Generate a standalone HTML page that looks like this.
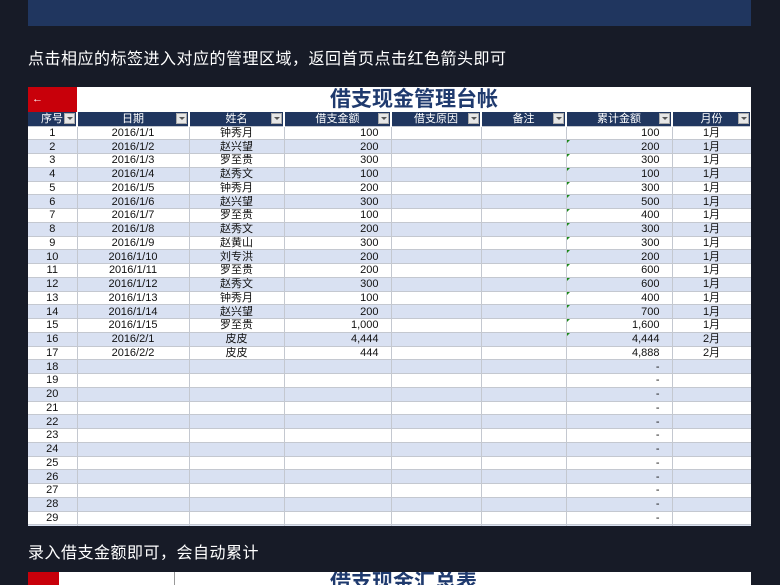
<!DOCTYPE html>
<html style="width:780px;height:585px;overflow:hidden"><head><meta charset="utf-8">
<style>
*{margin:0;padding:0;box-sizing:border-box}
body{width:780px;height:585px;overflow:hidden;background:#171b27;font-family:"Liberation Sans","Noto Sans CJK SC",sans-serif;position:relative}
.banner{position:absolute;left:28px;top:0;width:723px;height:26px;background:#20365f}
.cap{position:absolute;left:28px;color:#fff;font-size:16px;letter-spacing:0.5px}
.sheet{position:absolute;left:28px;top:87px;width:723px;height:439px;background:#fff;overflow:hidden}
.red{position:absolute;left:0;top:0;width:49px;height:25px;background:#c8000a;color:#fff;font-size:11px;line-height:25px;padding-left:4px}
.title{position:absolute;left:49px;top:0;width:674px;height:25px;text-align:center;color:#1f3a6e;font-size:21px;font-weight:bold;line-height:26px;letter-spacing:0px}
table{position:absolute;left:0;top:25px;border-collapse:collapse;table-layout:fixed;width:723px}
td,th{font-size:11px;height:13.75px;line-height:12px;padding:0 3px;border-right:1px solid #c4c8d0;border-bottom:1px solid #c4c8d0;white-space:nowrap;overflow:hidden;color:#111}
th{background:#20365f;color:#fff;font-weight:normal;position:relative;height:14px;border-right:2px solid #fff;text-align:center}
th i{position:absolute;right:1px;top:1px;width:11px;height:11px;background:#e6e6e6;border:1px solid #aaa}
th i:after{content:"";position:absolute;left:2px;top:3px;border-left:3px solid transparent;border-right:3px solid transparent;border-top:3px solid #555}
tr:nth-child(odd) td{background:#d9e1f2}
.c{text-align:center}.r{text-align:right;padding-right:12px}
.g{position:relative}
.g:before{content:"";position:absolute;left:0;top:0;border-top:3px solid #1a8a1a;border-right:3px solid transparent}
.sheet2{position:absolute;left:28px;top:572px;width:723px;height:13px;background:#fff;overflow:hidden}
.sheet2 .rd{position:absolute;left:0;top:0;width:31px;height:20px;background:#c8000a}
.sheet2 .dv{position:absolute;left:146px;top:0;width:1px;height:20px;background:#999}
.sheet2 .t{position:absolute;left:302px;top:-2px;color:#1f3a6e;font-size:21px;font-weight:bold;line-height:26px}
</style></head><body>
<div class="banner"></div>
<div class="cap" style="top:45px">点击相应的标签进入对应的管理区域，返回首页点击红色箭头即可</div>
<div class="sheet">
<div class="red">←</div>
<div class="title">借支现金管理台帐</div>
<table>
<colgroup><col style="width:49px"><col style="width:112px"><col style="width:95px"><col style="width:107px"><col style="width:90px"><col style="width:85px"><col style="width:106px"><col style="width:79px"></colgroup>
<tr><th>序号<i></i></th><th>日期<i></i></th><th>姓名<i></i></th><th>借支金额<i></i></th><th>借支原因<i></i></th><th>备注<i></i></th><th>累计金额<i></i></th><th>月份<i></i></th></tr>
<tr><td class="c">1</td><td class="c">2016/1/1</td><td class="c">钟秀月</td><td class="r">100</td><td></td><td></td><td class="r">100</td><td class="c">1月</td></tr>
<tr><td class="c">2</td><td class="c">2016/1/2</td><td class="c">赵兴望</td><td class="r">200</td><td></td><td></td><td class="r g">200</td><td class="c">1月</td></tr>
<tr><td class="c">3</td><td class="c">2016/1/3</td><td class="c">罗至贵</td><td class="r">300</td><td></td><td></td><td class="r g">300</td><td class="c">1月</td></tr>
<tr><td class="c">4</td><td class="c">2016/1/4</td><td class="c">赵秀文</td><td class="r">100</td><td></td><td></td><td class="r g">100</td><td class="c">1月</td></tr>
<tr><td class="c">5</td><td class="c">2016/1/5</td><td class="c">钟秀月</td><td class="r">200</td><td></td><td></td><td class="r g">300</td><td class="c">1月</td></tr>
<tr><td class="c">6</td><td class="c">2016/1/6</td><td class="c">赵兴望</td><td class="r">300</td><td></td><td></td><td class="r g">500</td><td class="c">1月</td></tr>
<tr><td class="c">7</td><td class="c">2016/1/7</td><td class="c">罗至贵</td><td class="r">100</td><td></td><td></td><td class="r g">400</td><td class="c">1月</td></tr>
<tr><td class="c">8</td><td class="c">2016/1/8</td><td class="c">赵秀文</td><td class="r">200</td><td></td><td></td><td class="r g">300</td><td class="c">1月</td></tr>
<tr><td class="c">9</td><td class="c">2016/1/9</td><td class="c">赵黄山</td><td class="r">300</td><td></td><td></td><td class="r g">300</td><td class="c">1月</td></tr>
<tr><td class="c">10</td><td class="c">2016/1/10</td><td class="c">刘专洪</td><td class="r">200</td><td></td><td></td><td class="r g">200</td><td class="c">1月</td></tr>
<tr><td class="c">11</td><td class="c">2016/1/11</td><td class="c">罗至贵</td><td class="r">200</td><td></td><td></td><td class="r g">600</td><td class="c">1月</td></tr>
<tr><td class="c">12</td><td class="c">2016/1/12</td><td class="c">赵秀文</td><td class="r">300</td><td></td><td></td><td class="r g">600</td><td class="c">1月</td></tr>
<tr><td class="c">13</td><td class="c">2016/1/13</td><td class="c">钟秀月</td><td class="r">100</td><td></td><td></td><td class="r g">400</td><td class="c">1月</td></tr>
<tr><td class="c">14</td><td class="c">2016/1/14</td><td class="c">赵兴望</td><td class="r">200</td><td></td><td></td><td class="r g">700</td><td class="c">1月</td></tr>
<tr><td class="c">15</td><td class="c">2016/1/15</td><td class="c">罗至贵</td><td class="r">1,000</td><td></td><td></td><td class="r g">1,600</td><td class="c">1月</td></tr>
<tr><td class="c">16</td><td class="c">2016/2/1</td><td class="c">皮皮</td><td class="r">4,444</td><td></td><td></td><td class="r g">4,444</td><td class="c">2月</td></tr>
<tr><td class="c">17</td><td class="c">2016/2/2</td><td class="c">皮皮</td><td class="r">444</td><td></td><td></td><td class="r">4,888</td><td class="c">2月</td></tr>
<tr><td class="c">18</td><td></td><td></td><td></td><td></td><td></td><td class="r">-</td><td></td></tr>
<tr><td class="c">19</td><td></td><td></td><td></td><td></td><td></td><td class="r">-</td><td></td></tr>
<tr><td class="c">20</td><td></td><td></td><td></td><td></td><td></td><td class="r">-</td><td></td></tr>
<tr><td class="c">21</td><td></td><td></td><td></td><td></td><td></td><td class="r">-</td><td></td></tr>
<tr><td class="c">22</td><td></td><td></td><td></td><td></td><td></td><td class="r">-</td><td></td></tr>
<tr><td class="c">23</td><td></td><td></td><td></td><td></td><td></td><td class="r">-</td><td></td></tr>
<tr><td class="c">24</td><td></td><td></td><td></td><td></td><td></td><td class="r">-</td><td></td></tr>
<tr><td class="c">25</td><td></td><td></td><td></td><td></td><td></td><td class="r">-</td><td></td></tr>
<tr><td class="c">26</td><td></td><td></td><td></td><td></td><td></td><td class="r">-</td><td></td></tr>
<tr><td class="c">27</td><td></td><td></td><td></td><td></td><td></td><td class="r">-</td><td></td></tr>
<tr><td class="c">28</td><td></td><td></td><td></td><td></td><td></td><td class="r">-</td><td></td></tr>
<tr><td class="c">29</td><td></td><td></td><td></td><td></td><td></td><td class="r">-</td><td></td></tr>
<tr><td class="c">30</td><td></td><td></td><td></td><td></td><td></td><td class="r">-</td><td></td></tr>
</table>
</div>
<div class="cap" style="top:539px">录入借支金额即可，会自动累计</div>
<div class="sheet2"><div class="rd"></div><div class="dv"></div><div class="t">借支现金汇总表</div></div>
</body></html>
